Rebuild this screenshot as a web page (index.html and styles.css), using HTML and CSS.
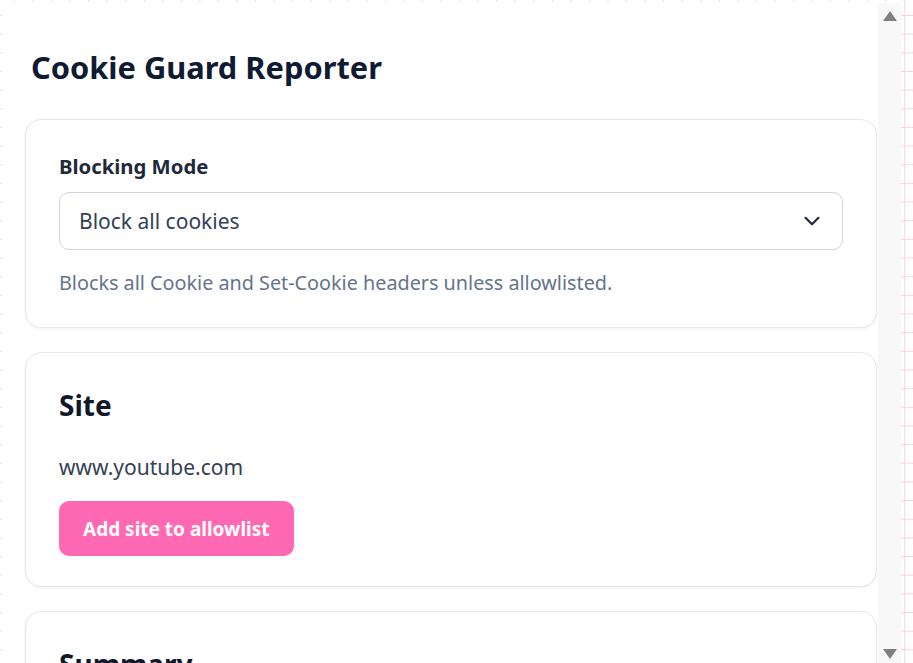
FILE: index.html
```html
<!DOCTYPE html>
<html lang="en">
<head>
<meta charset="utf-8">
<title>Cookie Guard Reporter</title>
<link rel="stylesheet" href="styles.css">
</head>
<body>
  <div class="frame">
    <main class="content">
      <h1 class="title">Cookie Guard Reporter</h1>

      <section class="card">
        <label class="field-label" for="mode">Blocking Mode</label>
        <div class="select" id="mode">
          <span class="select-value">Block all cookies</span>
          <svg class="chevron" viewBox="0 0 16 10" width="16" height="10" aria-hidden="true">
            <path d="M1.5 1.8l6.5 6.4 6.5-6.4" fill="none" stroke="#1e293b" stroke-width="2.2" stroke-linecap="round" stroke-linejoin="round"/>
          </svg>
        </div>
        <p class="help">Blocks all Cookie and Set-Cookie headers unless allowlisted.</p>
      </section>

      <section class="card">
        <h2 class="card-title">Site</h2>
        <p class="domain">www.youtube.com</p>
        <button class="btn-primary" type="button">Add site to allowlist</button>
      </section>

      <section class="card">
        <h2 class="card-title">Summary</h2>
      </section>
    </main>

    <div class="scrollbar" aria-hidden="true">
      <span class="arrow arrow-up"></span>
      <span class="arrow arrow-down"></span>
    </div>
  </div>
</body>
</html>
```

FILE: styles.css
```css
html, body {
  height: 100%;
}

body {
  margin: 0;
  overflow: hidden;
  font-family: "Noto Sans", "Open Sans", sans-serif;
  background-color: #ffffff;
  background-image:
    linear-gradient(to right, #ffcfe6 1px, transparent 1px),
    linear-gradient(to bottom, #ffcfe6 1px, transparent 1px);
  background-size: 18.56px 18.667px;
  background-position: 14px 15px;
}

.frame {
  display: flex;
  height: 661px;
  margin: 2px 12px 0 2px;
  background: #ffffff;
}

.content {
  flex: 1;
  min-width: 0;
  overflow: hidden;
  padding: 0 1px 0 23px;
  color: #0f172a;
}

.title {
  margin: 0 0 0 6px;
  padding-top: 44px;
  font-size: 30.8px;
  line-height: 42px;
  font-weight: 700;
  color: #0f1a33;
}

.card {
  margin-top: 31px;
  padding: 33px 33px 31px;
  background: #ffffff;
  border: 1px solid #e2e8f0;
  border-radius: 16px;
  box-shadow: 0 1px 3px rgba(15, 23, 42, 0.06);
}

.card + .card {
  margin-top: 24px;
  padding-bottom: 30px;
}

.field-label {
  display: block;
  font-size: 20.3px;
  line-height: 26px;
  font-weight: 700;
  color: #1e293b;
}

.select {
  display: flex;
  align-items: center;
  justify-content: space-between;
  height: 56px;
  margin-top: 13px;
  padding: 0 22px 0 19px;
  border: 1px solid #cbd5e1;
  border-radius: 10px;
  background: #ffffff;
}

.select-value {
  font-size: 21px;
  color: #334155;
}

.chevron {
  display: block;
}

.help {
  margin: 20px 0 0;
  font-size: 19.8px;
  line-height: 26px;
  color: #64748b;
}

.card-title {
  margin: 0;
  font-size: 28px;
  line-height: 38px;
  font-weight: 700;
  color: #0f172a;
}

.domain {
  margin: 29px 0 0;
  font-size: 21px;
  line-height: 28px;
  color: #334155;
}

.btn-primary {
  display: block;
  height: 55px;
  margin-top: 20px;
  padding: 0 24px;
  border: 0;
  border-radius: 10px;
  background: #ff69b4;
  color: #ffffff;
  font-family: inherit;
  font-size: 19px;
  font-weight: 700;
  cursor: pointer;
}

.scrollbar {
  flex: none;
  width: 23px;
  margin-top: 1px;
  background: #f8f8f8;
  display: flex;
  flex-direction: column;
  justify-content: space-between;
  align-items: center;
  padding: 8px 0 4px;
}

.arrow {
  width: 0;
  height: 0;
  border-left: 7px solid transparent;
  border-right: 7px solid transparent;
}

.arrow-up {
  border-bottom: 10px solid #7f7f7f;
}

.arrow-down {
  border-top: 10px solid #7f7f7f;
}
```
